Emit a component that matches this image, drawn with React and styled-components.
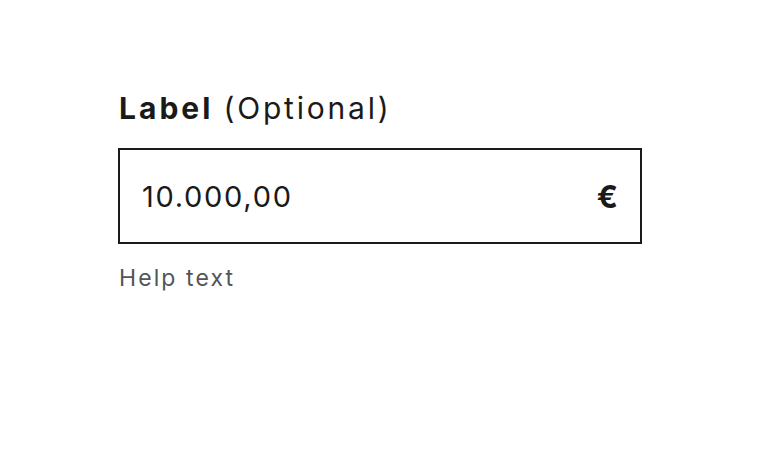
import * as React from 'react'
import styled, { createGlobalStyle } from 'styled-components'

const GlobalStyle = createGlobalStyle`
  html, body {
    margin: 0;
    padding: 0;
    background: #ffffff;
  }
  body {
    font-family: Inter, 'Liberation Sans', sans-serif;
    color: #1a1a1a;
  }
`

const Page = styled.div`
  width: 762px;
  height: 464px;
  display: flex;
  padding: 88px 0 0 118px;
  box-sizing: border-box;
`

const Field = styled.div`
  width: 524px;
  display: flex;
  flex-direction: column;
`

const Label = styled.label`
  font-size: 30px;
  line-height: 40px;
  font-weight: 700;
  letter-spacing: 3px;
  color: #1a1a1a;
  margin-left: 1px;
`

const Optional = styled.span`
  font-weight: 400;
  letter-spacing: 2.8px;
`

const InputBox = styled.div`
  margin-top: 20px;
  height: 96px;
  box-sizing: border-box;
  border: 2px solid #1a1a1a;
  display: flex;
  align-items: center;
  padding: 0 22px 0 22px;
`

const Input = styled.input`
  flex: 1;
  border: none;
  outline: none;
  background: transparent;
  font-family: inherit;
  font-size: 29px;
  letter-spacing: 1.7px;
  color: #1a1a1a;
  padding: 0;
  min-width: 0;
`

const Currency = styled.span`
  font-size: 31px;
  font-weight: 700;
  color: #1a1a1a;
`

const Help = styled.p`
  margin: 18px 0 0 1px;
  font-size: 23px;
  line-height: 32px;
  letter-spacing: 2.1px;
  color: #555555;
`

function MoneyField() {
  return (
    <Field>
      <Label>
        Label <Optional>(Optional)</Optional>
      </Label>
      <InputBox>
        <Input defaultValue="10.000,00" />
        <Currency>€</Currency>
      </InputBox>
      <Help>Help text</Help>
    </Field>
  )
}

export default function App() {
  return (
    <Page>
      <GlobalStyle />
      <MoneyField />
    </Page>
  )
}
